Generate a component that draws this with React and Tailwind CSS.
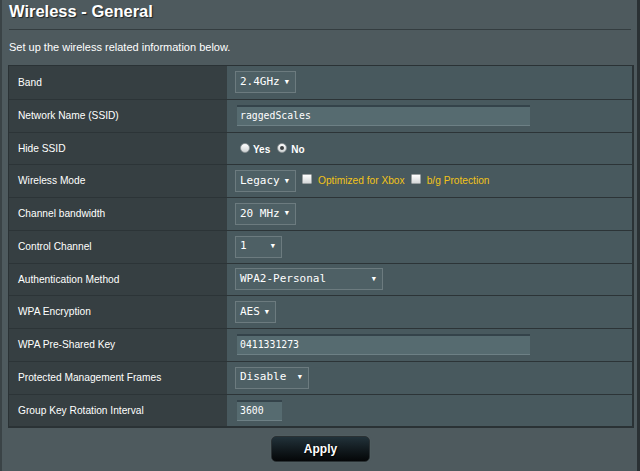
const rows = [
  { label: "Band", kind: "select", value: "2.4GHz", w: "w-[61px]" },
  { label: "Network Name (SSID)", kind: "input", value: "raggedScales", w: "w-[293px]" },
  { label: "Hide SSID", kind: "radio" },
  { label: "Wireless Mode", kind: "mode" },
  { label: "Channel bandwidth", kind: "select", value: "20 MHz", w: "w-[61px]" },
  { label: "Control Channel", kind: "select", value: "1", w: "w-[47px]" },
  { label: "Authentication Method", kind: "select", value: "WPA2-Personal", w: "w-[148px]" },
  { label: "WPA Encryption", kind: "select", value: "AES", w: "w-[41px]" },
  { label: "WPA Pre-Shared Key", kind: "input", value: "0411331273", w: "w-[293px]" },
  { label: "Protected Management Frames", kind: "select", value: "Disable", w: "w-[74px]" },
  { label: "Group Key Rotation Interval", kind: "input", value: "3600", w: "w-[45px]" },
];

const Select = ({ value, w }) => (
  <div
    className={`${w} h-[22px] flex items-center justify-between pl-[4px] pr-[6px] border border-[#6c7b7f] bg-[#4e6065] text-white text-[11px] font-['DejaVu_Sans_Mono',monospace]`}
  >
    <span>{value}</span>
    <span className="text-[7px] leading-none">▼</span>
  </div>
);

const Input = ({ value, w }) => (
  <div
    className={`${w} h-[21px] ml-[2px] flex items-center px-[3px] bg-[#566b70] border-t-2 border-t-[#34434a] border-b border-b-[#6d8085] text-white text-[9.8px] font-['DejaVu_Sans_Mono',monospace]`}
  >
    {value}
  </div>
);

const Radio = ({ checked }) => (
  <span className="block shrink-0 w-[10px] h-[10px] rounded-full border border-[#8d9598] bg-gradient-to-b from-white to-[#cfd3d4] flex items-center justify-center">
    {checked && <span className="block w-[4px] h-[4px] rounded-full bg-[#3a3f41]" />}
  </span>
);

const Check = () => (
  <span className="block shrink-0 w-[10px] h-[10px] -mt-[5px] rounded-[1px] border border-[#9aa0a2] bg-gradient-to-b from-white to-[#d5d8d9]" />
);

const Value = ({ row }) => {
  if (row.kind === "select") return <Select value={row.value} w={row.w} />;
  if (row.kind === "input") return <Input value={row.value} w={row.w} />;
  if (row.kind === "radio")
    return (
      <div className="flex items-center ml-[5px] text-white text-[10px] font-bold">
        <Radio />
        <span className="ml-[3px] mr-[7px] mt-[2px]">Yes</span>
        <Radio checked />
        <span className="ml-[4px] mt-[2px]">No</span>
      </div>
    );
  return (
    <div className="flex items-center text-[10.2px] text-[#f2c318]">
      <Select value="Legacy" w="w-[61px]" />
      <span className="ml-[6px]" />
      <Check />
      <span className="ml-[6px] -mt-[1px]">Optimized for Xbox</span>
      <span className="ml-[6px]" />
      <Check />
      <span className="ml-[6px] -mt-[1px]">b/g Protection</span>
    </div>
  );
};

export default function App() {
  return (
    <div className="w-[640px] h-[471px] bg-[#4e5a5e] border-l-2 border-l-[#3a4346] border-r-[3px] border-r-[#2a3134] font-['Liberation_Sans',Arial,sans-serif] overflow-hidden">
      <div className="pl-[6px]">
        <div className="h-[29px] pt-[1px] pl-[1px] text-[16.5px] leading-[20px] font-bold text-white [text-shadow:1px_1px_1px_#1c2224]">
          Wireless - General
        </div>
        <div className="w-[622px] h-px ml-[1px] bg-[#343d40]" />
        <div className="mt-[10px] pl-[1px] text-[11px] leading-[14px] text-white">
          Set up the wireless related information below.
        </div>
        <div className="mt-[11px] w-[626px] border border-[#2a3235] border-r-2 border-b-2">
          {rows.map((row, i) => (
            <div
              key={row.label}
              className={`flex h-[32.75px] ${i > 0 ? "border-t border-t-[#2c3437]" : ""}`}
            >
              <div className="w-[218px] shrink-0 bg-[#363f42] pl-[9px] flex items-center text-[10.2px] text-white">
                {row.label}
              </div>
              <div className="flex-1 bg-[#48595e] pl-[8px] flex items-center">
                <Value row={row} />
              </div>
            </div>
          ))}
        </div>
        <div className="flex justify-center mt-[8px] pr-[4px]">
          <button className="w-[99px] h-[26px] rounded-[5px] border border-[#2a3134] bg-gradient-to-b from-[#22323a] to-[#050708] text-white text-[12px] font-bold [text-shadow:1px_1px_1px_#000] shadow-[0_0_1px_#6b777a]">
            Apply
          </button>
        </div>
      </div>
    </div>
  );
}
